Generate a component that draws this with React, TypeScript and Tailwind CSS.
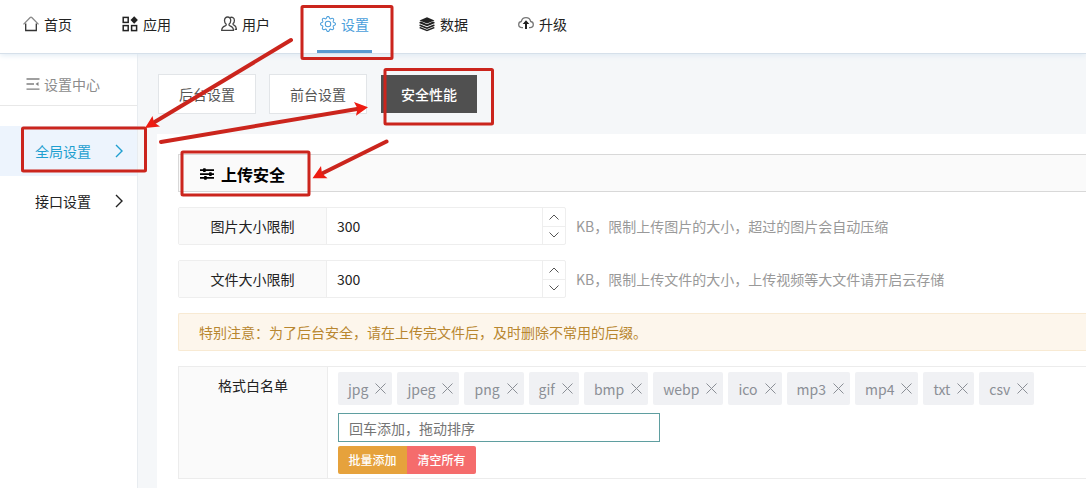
import React, { useState } from 'react';
import { BsGear } from 'react-icons/bs';

type IconProps = { className?: string };

const HomeIcon: React.FC<IconProps> = ({ className }) => (
  <svg viewBox="0 0 16 16" className={className} fill="none">
    <path d="M.5 8.400 7.200 1.500a1.100 1.100 0 0 1 1.600 0l6.700 6.900" stroke="#888" strokeWidth="1.300" />
    <path d="M2.700 7.500v7h10.600v-7" stroke="#333" strokeWidth="1.300" />
  </svg>
);

const AppsIcon: React.FC<IconProps> = ({ className }) => (
  <svg viewBox="0 0 16 16" className={className} fill="none" stroke="#222" strokeWidth="1.500">
    <rect x="1.200" y="1.400" width="5" height="5" />
    <rect x="1.200" y="9.600" width="5" height="5" />
    <rect x="9.600" y="9.600" width="5" height="5" />
    <path d="M12.200.300 15.900 4l-3.700 3.700L8.500 4z" fill="#222" stroke="none" />
  </svg>
);

const UsersIcon: React.FC<IconProps> = ({ className }) => (
  <svg viewBox="0 0 16 16" className={className} fill="none" stroke="#444" strokeWidth="1.300">
    <path d="M6.600 1C4.700 1 3.500 2.400 3.500 4.400c0 1.600.7 3 1.700 3.800.3.900-.2 1.300-1 1.600C2 10.600.7 11.600.7 14.400h11.800c0-2.800-1.300-3.800-3.500-4.600-.8-.3-1.300-.7-1-1.600 1-.8 1.700-2.200 1.700-3.800C9.700 2.400 8.500 1 6.600 1z" />
    <path d="M9 1.500c2.500-.9 4.400.6 4.400 2.900 0 1.300-.5 2.400-1.300 3.100-.3.900.1 1.300.9 1.700 1.500.7 2.300 1.900 2.400 4.200h-1.700" />
  </svg>
);

const LayersIcon: React.FC<IconProps> = ({ className }) => (
  <svg viewBox="0 0 17 16" className={className} fill="#222">
    <path d="M8.500.8 16.500 4.200 8.500 7.600.500 4.200z" />
    <path d="M.500 6l1.700-.7 6.300 2.900 6.300-2.900 1.700.7v1.100L8.500 10.500.500 7.100z" />
    <path d="M.500 8.900l1-.4 7 3 7-3 1 .4v1.100l-8 3.300-8-3.300z" />
    <path d="M.500 11.600l1-.4 7 2.900 7-2.900 1 .4v.9l-8 3.200-8-3.200z" />
  </svg>
);

const UpgradeIcon: React.FC<IconProps> = ({ className }) => (
  <svg viewBox="0 0 16 16" className={className} fill="none">
    <path
      d="M5 11.600H4C2.200 11.600.7 10.300.7 8.500c0-1.600 1.100-2.800 2.600-3C3.800 3.200 5.700 1.600 8 1.600s4.200 1.600 4.700 3.900c1.500.2 2.600 1.400 2.600 3 0 1.800-1.500 3.100-3.300 3.100h-1"
      stroke="#777"
      strokeWidth="1.300"
    />
    <path d="M8 4.200 11.300 8H9v5H7V8H4.700z" fill="#222" />
  </svg>
);

const MenuIcon: React.FC<IconProps> = ({ className }) => (
  <svg viewBox="0 0 14 14" className={className} fill="none" stroke="#808080" strokeWidth="1.300">
    <path d="M.500 2h13M.500 7h7.500M.500 12.200h13" />
    <path d="M9.500 7 12.500 5v4z" fill="#808080" stroke="none" />
  </svg>
);

const SlidersIcon: React.FC<IconProps> = ({ className }) => (
  <svg viewBox="0 0 14 12" className={className} fill="#000">
    <path d="M0 1.300h14V3H0zM0 5.200h14v1.700H0zM0 9.100h14v1.700H0z" />
    <rect x="3" y=".3" width="2.800" height="3.700" rx=".7" />
    <rect x="9" y="4.200" width="2.800" height="3.700" rx=".7" />
    <rect x="4" y="8.100" width="2.800" height="3.700" rx=".7" />
  </svg>
);

const Chevron: React.FC<IconProps> = ({ className }) => (
  <svg viewBox="0 0 8 14" className={className} fill="none" stroke="currentColor" strokeWidth="1.400">
    <path d="m1 1 6 6-6 6" />
  </svg>
);

const navItems = [
  { label: '首页', Icon: HomeIcon },
  { label: '应用', Icon: AppsIcon },
  { label: '用户', Icon: UsersIcon },
  { label: '设置', Icon: BsGear },
  { label: '数据', Icon: LayersIcon },
  { label: '升级', Icon: UpgradeIcon },
];

const sideItems = ['全局设置', '接口设置'];
const tabs = ['后台设置', '前台设置', '安全性能'];
const defaultFormats = ['jpg', 'jpeg', 'png', 'gif', 'bmp', 'webp', 'ico', 'mp3', 'mp4', 'txt', 'csv'];

interface NumberRowProps {
  id: string;
  label: string;
  hint: string;
}

const NumberRow: React.FC<NumberRowProps> = ({ id, label, hint }) => {
  const [value, setValue] = useState(300);

  return (
    <div className="mb-[15px] flex items-center">
      <div className="flex h-[38px] w-[388px] shrink-0 rounded-xs border border-[#eee]">
        <label htmlFor={id} className="flex w-[148px] items-center justify-center border-r border-[#eee] bg-[#fafafa] text-[#222]">
          {label}
        </label>
        <input
          id={id}
          type="number"
          value={value}
          onChange={(e) => setValue(Number(e.target.value))}
          className="min-w-0 flex-1 appearance-none bg-white px-[10px] text-[#222] outline-none [appearance:textfield] [&::-webkit-inner-spin-button]:appearance-none"
        />
        <div className="flex w-[23px] flex-col border-l border-[#eee] text-[#555]">
          <button type="button" aria-label="增加" onClick={() => setValue(value + 1)} className="flex flex-1 items-center justify-center border-b border-[#eee]">
            <svg viewBox="0 0 10 6" className="h-[6px] w-[10px]" fill="none" stroke="currentColor">
              <path d="M.5 5.500 5 1l4.500 4.500" />
            </svg>
          </button>
          <button type="button" aria-label="减少" onClick={() => setValue(value - 1)} className="flex flex-1 items-center justify-center">
            <svg viewBox="0 0 10 6" className="h-[6px] w-[10px]" fill="none" stroke="currentColor">
              <path d="M.5.500 5 5 9.500.500" />
            </svg>
          </button>
        </div>
      </div>
      <span className="ml-[10px] whitespace-nowrap text-[#999]">{hint}</span>
    </div>
  );
};

// Red guide boxes and arrows drawn over the page
const Guide: React.FC = () => (
  <svg aria-hidden="true" className="pointer-events-none absolute top-0 left-0 h-full w-full overflow-visible" fill="none" stroke="#cb251d" strokeWidth="3">
    <rect x="302" y="6.500" width="90" height="52" rx="1" />
    <rect x="22.500" y="128" width="123" height="43" rx="1" />
    <rect x="385" y="69.500" width="107.500" height="54.500" rx="1" />
    <rect x="182" y="152" width="127" height="43" rx="1" />
    <g strokeWidth="4" strokeLinecap="round">
      <path d="M291 40 153 123M161 142l199-33.500M386.500 141.500 321 174" />
    </g>
    <g fill="#ee1c12" stroke="none">
      <path d="M145 128l7.500-12 1.500 6.500 6 4z" />
      <path d="M368 107.300 354 102l3.500 6.500-1.500 7.200z" />
      <path d="M312.500 178.300 321 166l1 7.500 5.500 4.700z" />
    </g>
  </svg>
);

const App: React.FC = () => {
  const [formats, setFormats] = useState(defaultFormats);
  const [draft, setDraft] = useState('');

  const addFormats = () => {
    const names = draft.split(/[,，\s]+/).filter((name) => name && !formats.includes(name));
    setFormats([...formats, ...names]);
    setDraft('');
  };

  return (
    <div className="relative flex min-h-screen flex-col overflow-x-hidden bg-[#f5f7f9] font-['Noto_Sans_CJK_SC',sans-serif] text-sm text-[#222]">
      <header className="relative flex h-[54px] gap-11 border-b border-[#d6e0ea] bg-white px-5 shadow-[0_1px_6px_#dce8f2]">
        {navItems.map(({ label, Icon }) => (
          <a
            key={label}
            href="#"
            className={
              label === '设置'
                ? 'flex w-[55px] items-center justify-center gap-[5px] border-b-3 border-[#5b9bd0] pb-[2px] whitespace-nowrap text-[#4a9edb]'
                : 'flex w-[55px] items-center justify-center gap-[5px] border-b-3 border-transparent pb-[2px] whitespace-nowrap'
            }
          >
            <Icon className="h-4 w-4 shrink-0" />
            {label}
          </a>
        ))}
      </header>

      <div className="flex flex-1">
        <aside className="w-[138px] shrink-0 border-r border-[#e8ecf0] bg-white">
          <h2 className="mb-5 flex h-[52px] items-center gap-1 border-b border-[#e8e8e8] pt-2 pl-[26px] text-[#8c8c8c]">
            <MenuIcon className="h-[14px] w-[14px]" />
            设置中心
          </h2>
          <nav>
            {sideItems.map((item, i) => (
              <a
                key={item}
                href="#"
                className={
                  i === 0
                    ? 'flex h-[50px] items-center justify-between bg-[#edf4fd] pr-[14px] pl-[35px] text-[#1f9fd0]'
                    : 'flex h-[50px] items-center justify-between pr-[14px] pl-[35px]'
                }
              >
                {item}
                <Chevron className="h-[14px] w-2" />
              </a>
            ))}
          </nav>
        </aside>

        <main className="flex min-w-0 flex-1 flex-col pt-5 pl-[19px]">
          <div className="mb-5 flex gap-[13px] pl-[1px]">
            {tabs.map((tab, i) => (
              <button
                key={tab}
                type="button"
                className={
                  i === 2
                    ? 'h-10 w-[98px] border border-transparent bg-[#505050] bg-clip-padding font-medium text-white'
                    : 'h-10 w-[98px] border border-[#e2e5e8] bg-white text-[#555]'
                }
              >
                {tab}
              </button>
            ))}
          </div>

          <section className="flex-1 bg-white pt-5 pl-[21px]">
            <h1 className="mb-[15px] flex h-[38px] items-center gap-[7px] border border-r-0 border-[#d8d8d8] bg-[#fafafa] pt-[2px] pl-[21px] text-base font-bold text-black">
              <SlidersIcon className="h-3 w-[14px]" />
              上传安全
            </h1>

            <NumberRow id="image-size" label="图片大小限制" hint="KB，限制上传图片的大小，超过的图片会自动压缩" />
            <NumberRow id="file-size" label="文件大小限制" hint="KB，限制上传文件的大小，上传视频等大文件请开启云存储" />

            <p className="mb-[15px] flex h-[38px] items-center rounded-l-xs border border-r-0 border-[#f8ead3] bg-[#fdf6ec] pl-5 text-[#b8862f]">
              特别注意：为了后台安全，请在上传完文件后，及时删除不常用的后缀。
            </p>

            <div className="flex border border-r-0 border-[#ececec]">
              <label htmlFor="format" className="w-[149px] shrink-0 border-r border-[#ececec] bg-[#fafafa] pt-2 text-center">
                格式白名单
              </label>
              <div className="min-w-0 flex-1 px-[10px] pt-[5px] pb-1">
                <ul className="mb-2 flex flex-wrap gap-[5px]">
                  {formats.map((name) => (
                    <li key={name} className="flex h-[33px] items-center gap-[7px] rounded-xs bg-[#f0f1f4] pr-[6px] pl-[10px] text-[#8b8f96]">
                      {name}
                      <button type="button" aria-label={`删除 ${name}`} onClick={() => setFormats(formats.filter((f) => f !== name))}>
                        <svg viewBox="0 0 11 11" className="h-[11px] w-[11px]" stroke="currentColor">
                          <path d="M.5.500l10 10M10.500.500l-10 10" />
                        </svg>
                      </button>
                    </li>
                  ))}
                </ul>
                <input
                  id="format"
                  value={draft}
                  onChange={(e) => setDraft(e.target.value)}
                  onKeyDown={(e) => e.key === 'Enter' && addFormats()}
                  placeholder="回车添加，拖动排序"
                  className="mb-1 block h-[29px] w-[322px] max-w-full border border-[#5f9ea0] px-[10px] outline-none placeholder:text-[#757575]"
                />
                <div className="flex text-xs font-medium text-white">
                  <button type="button" onClick={addFormats} className="h-7 w-[69px] rounded-l-xs bg-[#e6a23c]">
                    批量添加
                  </button>
                  <button type="button" onClick={() => setFormats([])} className="h-7 w-[69px] rounded-r-xs bg-[#f56c6c]">
                    清空所有
                  </button>
                </div>
              </div>
            </div>
          </section>
        </main>
      </div>

      <Guide />
    </div>
  );
};

export default App;
